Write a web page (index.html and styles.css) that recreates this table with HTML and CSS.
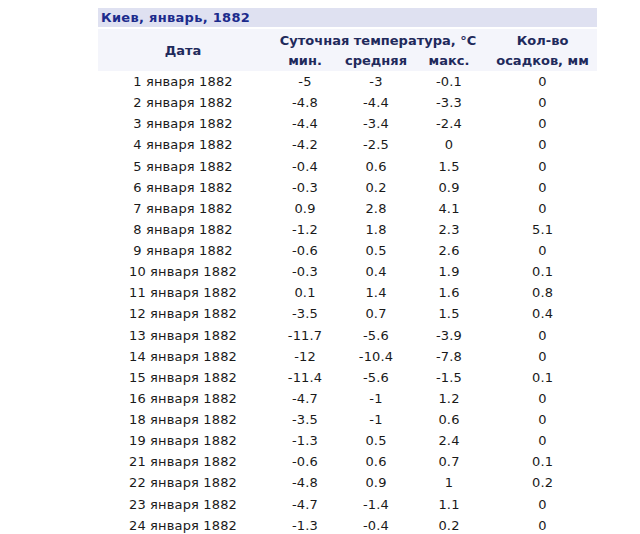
FILE: index.html
```html
<!DOCTYPE html>
<html lang="ru">
<head>
<meta charset="utf-8">
<title>Киев, январь, 1882</title>
<link rel="stylesheet" href="styles.css">
</head>
<body>
<div class="wrap">
  <div class="title">Киев, январь, 1882</div>
  <table class="weather">
    <colgroup>
      <col class="c-date"><col class="c-min"><col class="c-avg"><col class="c-max"><col class="c-prec">
    </colgroup>
    <thead>
      <tr class="h1">
        <th rowspan="2">Дата</th>
        <th colspan="3">Суточная температура, °С</th>
        <th class="prec-h">Кол-во</th>
      </tr>
      <tr class="h2">
        <th>мин.</th><th>средняя</th><th>макс.</th>
        <th class="prec-h">осадков, мм</th>
      </tr>
    </thead>
    <tbody>
      <tr><td>1 января 1882</td><td>-5</td><td>-3</td><td>-0.1</td><td>0</td></tr>
      <tr><td>2 января 1882</td><td>-4.8</td><td>-4.4</td><td>-3.3</td><td>0</td></tr>
      <tr><td>3 января 1882</td><td>-4.4</td><td>-3.4</td><td>-2.4</td><td>0</td></tr>
      <tr><td>4 января 1882</td><td>-4.2</td><td>-2.5</td><td>0</td><td>0</td></tr>
      <tr><td>5 января 1882</td><td>-0.4</td><td>0.6</td><td>1.5</td><td>0</td></tr>
      <tr><td>6 января 1882</td><td>-0.3</td><td>0.2</td><td>0.9</td><td>0</td></tr>
      <tr><td>7 января 1882</td><td>0.9</td><td>2.8</td><td>4.1</td><td>0</td></tr>
      <tr><td>8 января 1882</td><td>-1.2</td><td>1.8</td><td>2.3</td><td>5.1</td></tr>
      <tr><td>9 января 1882</td><td>-0.6</td><td>0.5</td><td>2.6</td><td>0</td></tr>
      <tr><td>10 января 1882</td><td>-0.3</td><td>0.4</td><td>1.9</td><td>0.1</td></tr>
      <tr><td>11 января 1882</td><td>0.1</td><td>1.4</td><td>1.6</td><td>0.8</td></tr>
      <tr><td>12 января 1882</td><td>-3.5</td><td>0.7</td><td>1.5</td><td>0.4</td></tr>
      <tr><td>13 января 1882</td><td>-11.7</td><td>-5.6</td><td>-3.9</td><td>0</td></tr>
      <tr><td>14 января 1882</td><td>-12</td><td>-10.4</td><td>-7.8</td><td>0</td></tr>
      <tr><td>15 января 1882</td><td>-11.4</td><td>-5.6</td><td>-1.5</td><td>0.1</td></tr>
      <tr><td>16 января 1882</td><td>-4.7</td><td>-1</td><td>1.2</td><td>0</td></tr>
      <tr><td>18 января 1882</td><td>-3.5</td><td>-1</td><td>0.6</td><td>0</td></tr>
      <tr><td>19 января 1882</td><td>-1.3</td><td>0.5</td><td>2.4</td><td>0</td></tr>
      <tr><td>21 января 1882</td><td>-0.6</td><td>0.6</td><td>0.7</td><td>0.1</td></tr>
      <tr><td>22 января 1882</td><td>-4.8</td><td>0.9</td><td>1</td><td>0.2</td></tr>
      <tr><td>23 января 1882</td><td>-4.7</td><td>-1.4</td><td>1.1</td><td>0</td></tr>
      <tr><td>24 января 1882</td><td>-1.3</td><td>-0.4</td><td>0.2</td><td>0</td></tr>
    </tbody>
  </table>
</div>
</body>
</html>
```
FILE: styles.css
```css
html, body {
  background: #ffffff;
}
body {
  margin: 8px 0 0 98px;
  font-family: "DejaVu Sans", Verdana, sans-serif;
  font-size: 13px;
  color: #1a1a1a;
}
.wrap {
  width: 499px;
}
.title {
  height: 19px;
  line-height: 20px;
  background: #dfe1f1;
  color: #1c2b8c;
  font-weight: bold;
  letter-spacing: 0.3px;
  padding-left: 3px;
  margin-bottom: 2px;
}
.weather {
  width: 499px;
  border-collapse: collapse;
  table-layout: fixed;
}
.c-date { width: 170px; }
.c-min { width: 74px; }
.c-avg { width: 68px; }
.c-max { width: 78px; }
.c-prec { width: 109px; }
.weather th, .weather td {
  padding: 0;
  text-align: center;
  white-space: nowrap;
}
.weather thead tr {
  background: #f4f5fb;
}
.weather th {
  font-weight: bold;
  color: #1f2a5c;
}
.weather .h1 th { height: 21px; vertical-align: bottom; line-height: 19px; }
.weather .h1 th[rowspan] { vertical-align: middle; line-height: 21px; }
.weather .h2 th { height: 20px; vertical-align: middle; line-height: 21px; }
.weather tbody td {
  height: 21.14px;
  line-height: 21px;
  letter-spacing: 0.15px;
}
```
